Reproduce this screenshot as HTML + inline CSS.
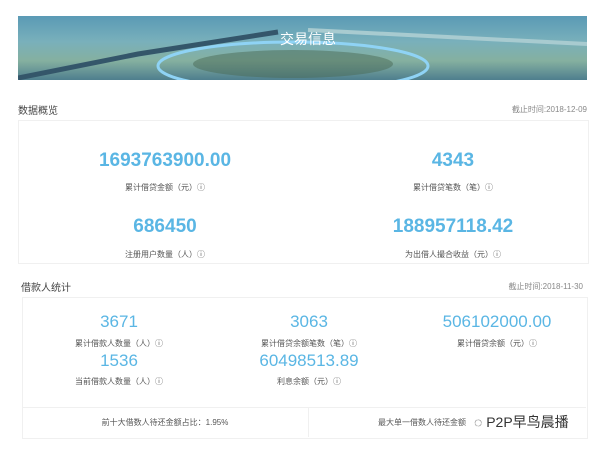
<!DOCTYPE html>
<html><head><meta charset="utf-8"><style>
body{margin:0;width:605px;height:452px;background:#fff;font-family:"Liberation Sans","Noto Sans CJK SC",sans-serif;position:relative;overflow:hidden}
.a{position:absolute;white-space:nowrap}
.c{transform:translateX(-50%);text-align:center}
.n{color:#5ab6e4}
.l{font-size:8px;color:#555}
.banner{position:absolute;left:18px;top:16px;width:569px;height:64px;background:linear-gradient(180deg,#5a9ab5 0%,#79b0bb 40%,#85b0a0 70%,#4e7e8e 100%)}
</style></head><body>
<div class="banner">
<svg width="569" height="64" style="position:absolute;left:0;top:0">
<path d="M0 62 L120 38 L260 16" stroke="#34566a" stroke-width="5" fill="none"/>
<path d="M290 14 L569 28" stroke="#a8cbd0" stroke-width="4" fill="none"/>
<ellipse cx="275" cy="50" rx="135" ry="24" fill="none" stroke="#8fd3f5" stroke-width="3"/>
<ellipse cx="275" cy="48" rx="100" ry="14" fill="#4a6a55" opacity=".5"/>
</svg>
<div class="a c" style="left:290px;top:13px;color:#fff;font-size:14px">交易信息</div>
</div>
<div class="a" style="left:18px;top:102px;font-size:10px;color:#444">数据概览</div>
<div class="a" style="right:18px;top:104px;font-size:8px;color:#888">截止时间:2018-12-09</div>
<div class="a" style="left:18px;top:120px;width:569px;height:142px;border:1px solid #f0f0f0"></div>
<div class="a c n" style="left:165px;top:150px;font-size:19px;font-weight:bold">1693763900.00</div>
<div class="a c l" style="left:165px;top:182px">累计借贷金额（元）ⓘ</div>
<div class="a c n" style="left:453px;top:150px;font-size:19px;font-weight:bold">4343</div>
<div class="a c l" style="left:453px;top:182px">累计借贷笔数（笔）ⓘ</div>
<div class="a c n" style="left:165px;top:216px;font-size:19px;font-weight:bold">686450</div>
<div class="a c l" style="left:165px;top:249px">注册用户数量（人）ⓘ</div>
<div class="a c n" style="left:453px;top:216px;font-size:19px;font-weight:bold">188957118.42</div>
<div class="a c l" style="left:453px;top:249px">为出借人撮合收益（元）ⓘ</div>
<div class="a" style="left:21px;top:279px;font-size:10px;color:#444">借款人统计</div>
<div class="a" style="right:22px;top:281px;font-size:8px;color:#888">截止时间:2018-11-30</div>
<div class="a" style="left:22px;top:297px;width:564px;height:140px;border:1px solid #f0f0f0"></div>
<div class="a" style="left:22px;top:407px;width:564px;border-top:1px solid #f0f0f0"></div>
<div class="a" style="left:308px;top:407px;height:30px;border-left:1px solid #f0f0f0"></div>
<div class="a c n" style="left:119px;top:312px;font-size:17px">3671</div>
<div class="a c l" style="left:119px;top:338px">累计借款人数量（人）ⓘ</div>
<div class="a c n" style="left:309px;top:312px;font-size:17px">3063</div>
<div class="a c l" style="left:309px;top:338px">累计借贷余额笔数（笔）ⓘ</div>
<div class="a c n" style="left:497px;top:312px;font-size:17px">506102000.00</div>
<div class="a c l" style="left:497px;top:338px">累计借贷余额（元）ⓘ</div>
<div class="a c n" style="left:119px;top:351px;font-size:17px">1536</div>
<div class="a c l" style="left:119px;top:376px">当前借款人数量（人）ⓘ</div>
<div class="a c n" style="left:309px;top:351px;font-size:17px">60498513.89</div>
<div class="a c l" style="left:309px;top:376px">利息余额（元）ⓘ</div>
<div class="a c l" style="left:165px;top:417px">前十大借数人待还金额占比：1.95%</div>
<div class="a l" style="left:378px;top:417px">最大单一借数人待还金额</div>
<div class="a" style="left:474px;top:412px;font-size:14px;color:#333;background:rgba(255,255,255,.85)">◌ P2P早鸟晨播</div>
</body></html>
